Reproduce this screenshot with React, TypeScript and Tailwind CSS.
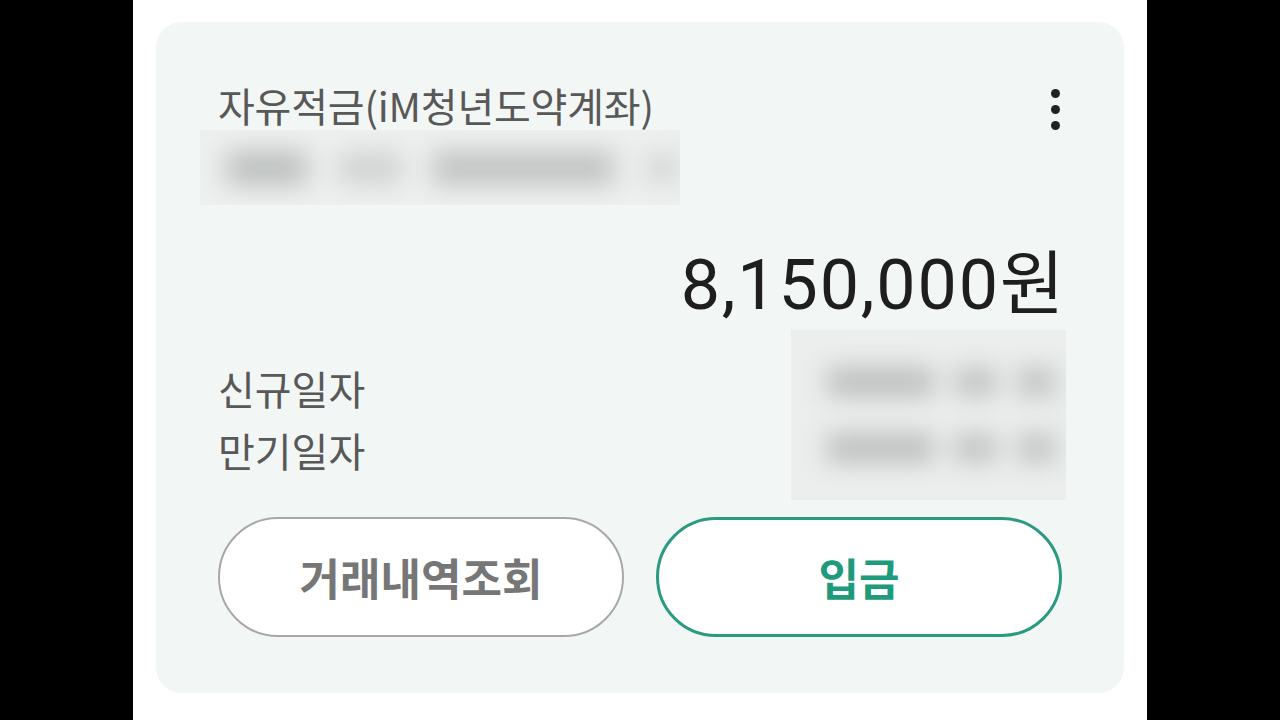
import React from "react";

const kr = { fontFamily: '"Noto Sans CJK KR", "Noto Sans", sans-serif' };

export default function App() {
  return (
    <div className="w-[1280px] h-[720px] bg-black flex justify-center overflow-hidden" style={kr}>
      <div className="w-[1014px] h-[720px] bg-white pl-[23px] pt-[22px]">
        <div className="w-[968px] h-[671px] bg-[#f2f6f5] rounded-[26px] px-[62px] pt-[59px] flex flex-col">
          <div className="flex items-start justify-between h-[48px]">
            <div className="text-[40px] leading-[48px] text-[#585858] tracking-[-0.2px]">
              자유적금(iM청년도약계좌)
            </div>
            <div className="flex flex-col items-center gap-[7px] mt-[8px] mr-[2px]">
              <span className="w-[9px] h-[9px] rounded-full bg-[#222]" />
              <span className="w-[9px] h-[9px] rounded-full bg-[#222]" />
              <span className="w-[9px] h-[9px] rounded-full bg-[#222]" />
            </div>
          </div>
          <div className="relative h-[75px] w-[480px] -ml-[18px] mt-[1px] bg-[#edf0ef] overflow-hidden">
            <div className="absolute inset-0 flex items-center gap-[30px] pl-[26px] blur-[13px]">
              <span className="w-[90px] h-[34px] rounded bg-[#bcbfbe]" />
              <span className="w-[70px] h-[30px] rounded bg-[#cdd0cf]" />
              <span className="w-[200px] h-[34px] rounded bg-[#bfc2c1]" />
              <span className="w-[40px] h-[28px] rounded bg-[#d3d6d5]" />
            </div>
          </div>
          <div className="flex justify-end mt-[40px] -mr-[4px]">
            <div className="text-[70px] leading-[80px] text-[#1e1e1e] tracking-[1.8px]" style={{ fontFamily: 'Roboto, "Noto Sans CJK KR", sans-serif' }}>
              8,150,000원
            </div>
          </div>
          <div className="flex justify-between mt-[5px]">
            <div className="flex flex-col gap-[14px] pt-[34px] text-[40px] leading-[48px] text-[#585858]">
              <div>신규일자</div>
              <div>만기일자</div>
            </div>
            <div className="relative w-[275px] h-[170px] -mr-[4px] bg-[#ebeeed] overflow-hidden">
              <div className="absolute inset-0 flex flex-col justify-center gap-[36px] pl-[36px] pr-[10px] blur-[12px]">
                <div className="flex gap-[20px]">
                  <span className="w-[125px] h-[30px] bg-[#bdc0bf]" />
                  <span className="w-[50px] h-[30px] bg-[#c2c5c4]" />
                  <span className="w-[45px] h-[30px] bg-[#c2c5c4]" />
                </div>
                <div className="flex gap-[20px]">
                  <span className="w-[125px] h-[30px] bg-[#bdc0bf]" />
                  <span className="w-[50px] h-[30px] bg-[#c2c5c4]" />
                  <span className="w-[45px] h-[30px] bg-[#c2c5c4]" />
                </div>
              </div>
            </div>
          </div>
          <div className="flex justify-between mt-[17px]">
            <button className="w-[406px] h-[120px] rounded-full border-2 border-[#a8a8a8] bg-white text-[44px] font-bold text-[#767676]">
              거래내역조회
            </button>
            <button className="w-[406px] h-[120px] rounded-full border-[3px] border-[#2a9a80] bg-white text-[44px] font-bold text-[#1e9a7c]">
              입금
            </button>
          </div>
        </div>
      </div>
    </div>
  );
}
